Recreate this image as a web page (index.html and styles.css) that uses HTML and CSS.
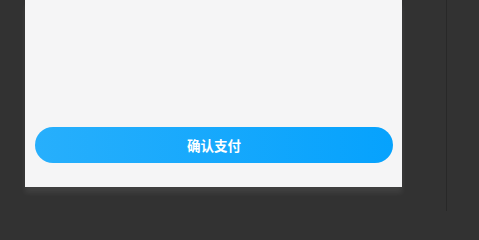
FILE: index.html
```html
<!DOCTYPE html>
<html lang="zh">
<head>
<meta charset="utf-8">
<link rel="stylesheet" href="styles.css">
</head>
<body>
<div class="stage">
  <div class="panel">
    <button class="pay-btn">确认支付</button>
  </div>
  <div class="divider"></div>
</div>
</body>
</html>
```
FILE: styles.css
```css
html, body {
  margin: 0;
  padding: 0;
  background: #323232;
  width: 479px;
  height: 211px;
  overflow: hidden;
}
.stage {
  display: flex;
  align-items: flex-start;
  height: 211px;
}
.panel {
  margin-left: 25px;
  width: 377px;
  height: 187px;
  background: #f5f5f6;
  box-sizing: border-box;
  padding: 0 9px 24px 10px;
  display: flex;
  flex-direction: column;
  justify-content: flex-end;
  box-shadow: 0 6px 5px rgba(255, 255, 255, 0.07);
}
.pay-btn {
  height: 36px;
  width: 100%;
  border: none;
  border-radius: 18px;
  background: linear-gradient(90deg, #27affc 0%, #06a2fd 100%);
  color: #fff;
  font-family: "Noto Sans CJK SC", "Noto Sans", sans-serif;
  font-size: 13.5px;
  font-weight: 600;
  padding: 0;
  line-height: 36px;
}
.divider {
  margin-left: 44px;
  width: 1px;
  height: 211px;
  background: #282828;
}
```
